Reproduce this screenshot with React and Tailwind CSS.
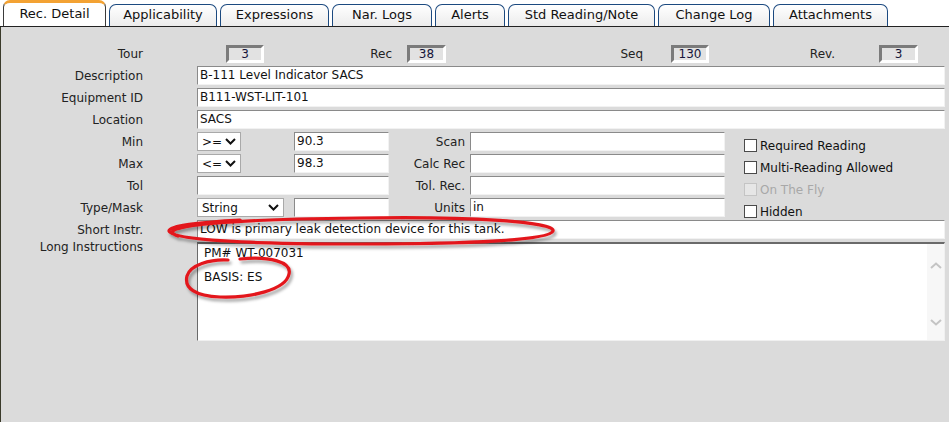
import React from "react";

const tabs = [
  { label: "Rec. Detail", w: "w-[103px]", active: true },
  { label: "Applicability", w: "w-[108px]" },
  { label: "Expressions", w: "w-[109px]" },
  { label: "Nar. Logs", w: "w-[100px]" },
  { label: "Alerts", w: "w-[70px]" },
  { label: "Std Reading/Note", w: "w-[147px]" },
  { label: "Change Log", w: "w-[112px]" },
  { label: "Attachments", w: "w-[115px]" },
];

function Tabs() {
  return (
    <div className="h-[27px] flex items-end pl-[3px] gap-[3px] bg-white border-b border-[#222]">
      {tabs.map((t) =>
        t.active ? (
          <div
            key={t.label}
            className={`${t.w} h-[26px] rounded-t-[7px] border-t-[3px] border-t-[#f3a233] border-x border-x-[#3b3b3b] bg-white text-center text-[13px] leading-[21px] text-[#111]`}
          >
            {t.label}
          </div>
        ) : (
          <div
            key={t.label}
            className={`${t.w} h-[22px] rounded-t-[7px] border border-b-0 border-[#1c4a80] bg-gradient-to-b from-white to-[#ececec] text-center text-[13px] leading-[20px] text-[#111]`}
          >
            {t.label}
          </div>
        )
      )}
    </div>
  );
}

function NumBox({ value, className = "" }) {
  return (
    <div
      className={`h-[18px] border-[3px] border-t-[#7b7b7b] border-l-[#7b7b7b] border-b-white border-r-white bg-[#e2e2e2] text-center text-[12px] leading-[12px] text-[#15153a] ${className}`}
    >
      {value}
    </div>
  );
}

function Field({ value = "", className = "" }) {
  return (
    <div
      className={`h-[19px] bg-white border border-t-[#8a8a8a] border-l-[#8a8a8a] border-r-[#f2f2f2] border-b-[#f2f2f2] px-[2px] text-[12px] leading-[17px] text-[#111] whitespace-nowrap overflow-hidden ${className}`}
    >
      {value}
    </div>
  );
}

function Chevron({ className = "" }) {
  return (
    <svg width="11" height="7" viewBox="0 0 11 7" className={className}>
      <path d="M1 1 L5.5 5.5 L10 1" fill="none" stroke="#111" strokeWidth="2" />
    </svg>
  );
}

function Select({ value, className = "" }) {
  return (
    <div
      className={`h-[19px] bg-white border border-[#a9a9a9] flex items-center justify-between pl-[4px] pr-[4px] text-[12px] text-[#111] ${className}`}
    >
      <span>{value}</span>
      <Chevron />
    </div>
  );
}

function Check({ label, disabled }) {
  return (
    <div className="flex items-center ml-[19px] mt-[8px] text-[12px]">
      <div
        className={`w-[13px] h-[13px] border ${
          disabled ? "border-[#c4c4c4] bg-[#e6e6e6]" : "border-[#4a4a4a] bg-white"
        }`}
      />
      <span className={`ml-[3px] ${disabled ? "text-[#a8a8a8]" : "text-[#111]"}`}>{label}</span>
    </div>
  );
}

function Row({ label, children, className = "h-[19px] items-center", labelClass = "" }) {
  return (
    <div className={`flex mt-[3px] ${className}`}>
      <div className={`w-[142px] text-right text-[12px] text-[#222] shrink-0 ${labelClass}`}>{label}</div>
      <div className="ml-[54px] flex items-center flex-1 pr-[4px]">{children}</div>
    </div>
  );
}

function MidLabel({ children }) {
  return <div className="w-[76px] text-right text-[12px] text-[#222] mr-[5px]">{children}</div>;
}

function Overlay() {
  return (
    <svg className="absolute inset-0 pointer-events-none" width="949" height="422">
      <defs>
        <filter id="sh" x="-10%" y="-50%" width="120%" height="200%">
          <feDropShadow dx="2" dy="3" stdDeviation="1.6" floodColor="#000" floodOpacity="0.35" />
        </filter>
      </defs>
      <g filter="url(#sh)" fill="none" stroke="#e3161b" strokeLinecap="round">
        <path
          d="M178 236 C 150 226, 230 219, 360 218 C 470 216, 556 222, 553 231 C 550 240, 470 244, 360 244 C 250 244, 172 240, 169 231 C 168 226, 200 222, 240 220"
          strokeWidth="3.2"
        />
        <path
          d="M240 259 C 270 256, 292 262, 289 274 C 286 290, 250 298, 220 297 C 195 296, 184 288, 187 276 C 190 265, 210 259, 228 260"
          strokeWidth="3.2"
        />
      </g>
    </svg>
  );
}

export default function App() {
  return (
    <div className="relative w-[949px] h-[422px] overflow-hidden bg-white flex flex-col font-['DejaVu_Sans',sans-serif]">
      <Tabs />
      <div className="flex-1 bg-[#dbdbdb] border-l border-[#3a3a2a] pt-[18px]">
        {/* header numbers */}
        <div className="flex items-center h-[18px] text-[12px] text-[#222]">
          <div className="w-[142px] text-right">Tour</div>
          <NumBox value="3" className="ml-[83px] w-[38px]" />
          <div className="w-[128px] text-right">Rec</div>
          <NumBox value="38" className="ml-[15px] w-[39px]" />
          <div className="w-[197px] text-right">Seq</div>
          <NumBox value="130" className="ml-[28px] w-[38px]" />
          <div className="w-[126px] text-right">Rev.</div>
          <NumBox value="3" className="ml-[44px] w-[39px]" />
        </div>

        <Row label="Description">
          <Field value="B-111 Level Indicator SACS" className="flex-1" />
        </Row>
        <Row label="Equipment ID">
          <Field value="B111-WST-LIT-101" className="flex-1" />
        </Row>
        <Row label="Location">
          <Field value="SACS" className="flex-1" />
        </Row>
        <Row label="Min">
          <Select value=">=" className="w-[44px]" />
          <Field value="90.3" className="ml-[53px] w-[95px]" />
          <MidLabel>Scan</MidLabel>
          <Field className="w-[255px]" />
          <Check label="Required Reading" />
        </Row>
        <Row label="Max">
          <Select value="<=" className="w-[44px]" />
          <Field value="98.3" className="ml-[53px] w-[95px]" />
          <MidLabel>Calc Rec</MidLabel>
          <Field className="w-[255px]" />
          <Check label="Multi-Reading Allowed" />
        </Row>
        <Row label="Tol">
          <Field className="w-[192px]" />
          <MidLabel>Tol. Rec.</MidLabel>
          <Field className="w-[255px]" />
          <Check label="On The Fly" disabled />
        </Row>
        <Row label="Type/Mask">
          <Select value="String" className="w-[87px]" />
          <Field className="ml-[10px] w-[95px]" />
          <MidLabel>Units</MidLabel>
          <Field value="in" className="w-[255px]" />
          <Check label="Hidden" />
        </Row>
        <Row label="Short Instr.">
          <Field value="LOW is primary leak detection device for this tank." className="flex-1" />
        </Row>
        <Row label="Long Instructions" className="h-[99px] items-start" labelClass="leading-[11px]">
          <div className="h-[99px] flex-1 self-start flex bg-white border-t-2 border-l border-t-[#6a6a6a] border-l-[#6a6a6a] border-r border-b border-r-[#f0f0f0] border-b-[#f0f0f0]">
            <div className="flex-1 pl-[6px] pt-[2px] text-[12px] leading-[14px] text-[#111]">
              <div>PM# WT-007031</div>
              <div className="mt-[10px]">BASIS: ES</div>
            </div>
            <div className="w-[17px] bg-[#f7f7f7] flex flex-col items-center justify-between pt-[18px] pb-[14px]">
              <svg width="12" height="7" viewBox="0 0 12 7">
                <path d="M1 6 L6 1.5 L11 6" fill="none" stroke="#c4c4c4" strokeWidth="2" />
              </svg>
              <svg width="12" height="7" viewBox="0 0 12 7">
                <path d="M1 1 L6 5.5 L11 1" fill="none" stroke="#c4c4c4" strokeWidth="2" />
              </svg>
            </div>
          </div>
        </Row>
      </div>
      <Overlay />
    </div>
  );
}
